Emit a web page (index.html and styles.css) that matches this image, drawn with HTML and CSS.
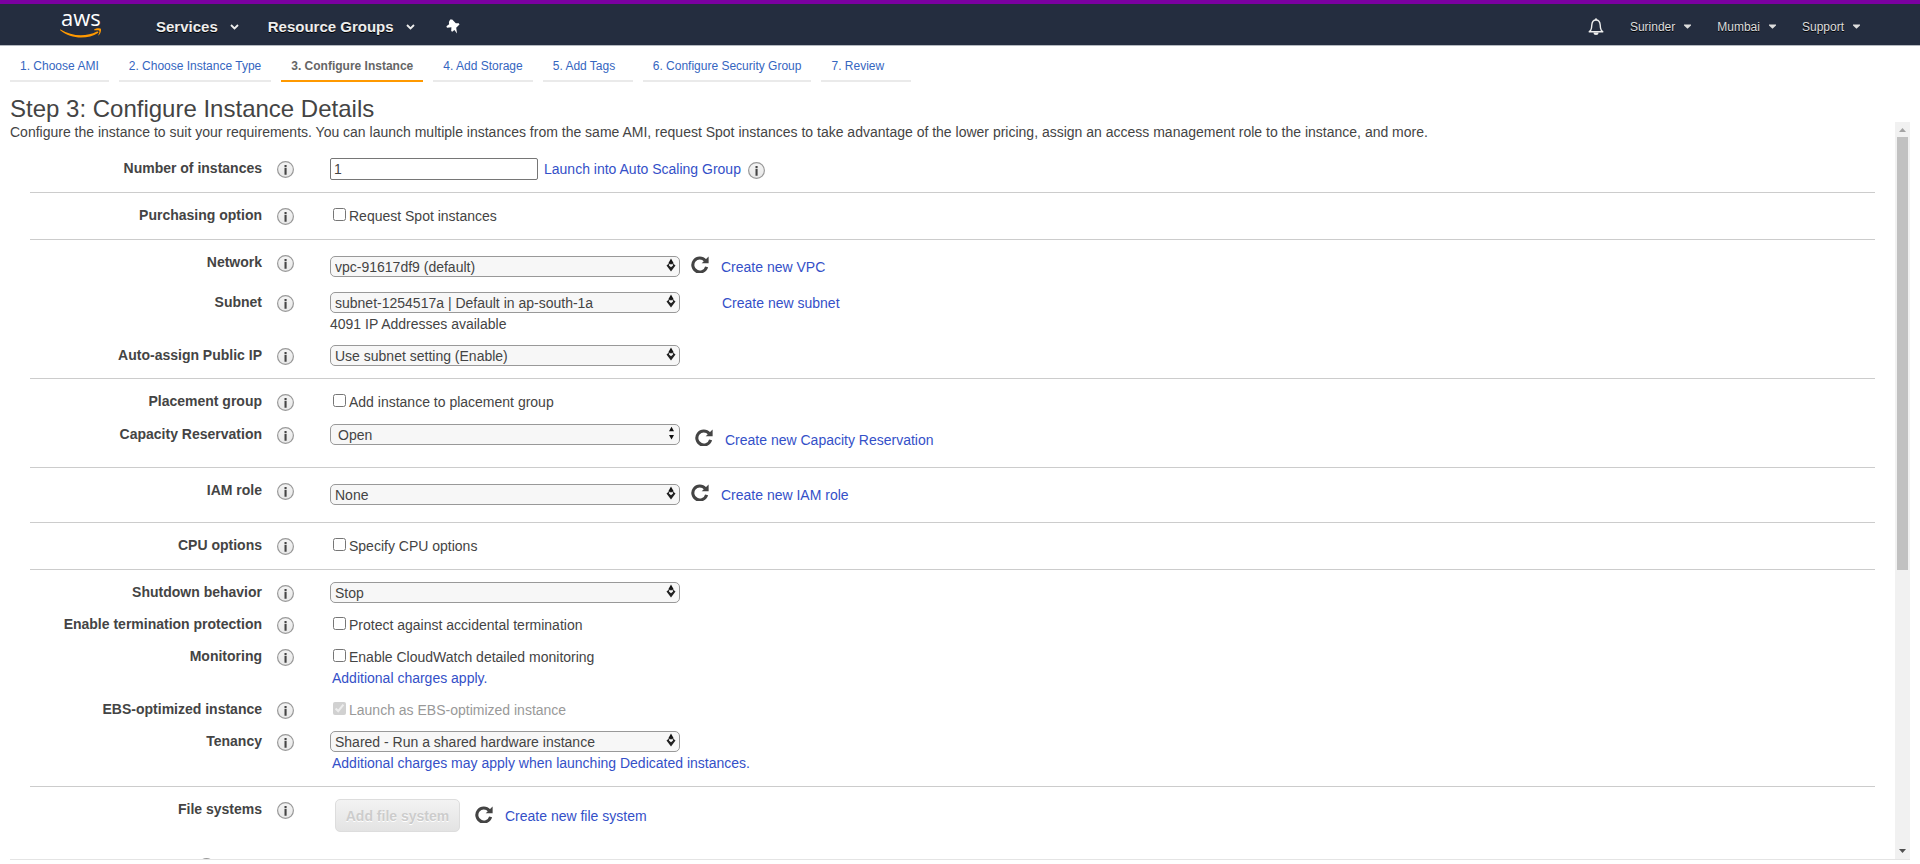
FILE: index.html
```html
<!DOCTYPE html>
<html lang="en">
<head>
<meta charset="utf-8">
<title>Launch instance wizard</title>
<link rel="stylesheet" href="styles.css">
</head>
<body>
<svg class="defs" width="0" height="0" aria-hidden="true">
  <defs>
    <linearGradient id="info-fill" x1="0" y1="0" x2="0" y2="1"><stop offset="0" stop-color="#f4f4f4"/><stop offset="1" stop-color="#e8e8e8"/></linearGradient>
    <symbol id="info" viewBox="0 0 17 17"><circle cx="8.500" cy="8.500" r="7.900" fill="url(#info-fill)" stroke="#999" stroke-width="1.200"/><path d="M7.500 4h2.100v1.900H7.500zM7.500 6.800h2.100v6.900H7.500z" fill="#444"/></symbol>
    <symbol id="refresh" viewBox="0 0 18 17"><path d="M14.200 4.500A7 7 0 1 0 15.600 10.800" fill="none" stroke="#444" stroke-width="3.100"/><path d="M17.600 .4v6.900h-6.900z" fill="#444"/></symbol>
    <symbol id="arrows" viewBox="0 0 10 14"><path d="M5 .5L7.800 5.500H2.200z" fill="#111"/><path d="M5 4L9.500 7.500 5 13.500.5 7.500z" fill="#222"/><path d="M3 6.300h4v1.200L5 9.200 3 7.500z" fill="#f7f7f7"/></symbol>
    <symbol id="arrows-plain" viewBox="0 0 10 14"><path d="M5.500 .8L8 5.300H3zM5.500 13.500L3 9h5z" fill="#111"/></symbol>
    <symbol id="chevron" viewBox="0 0 9 6"><path d="M1 1l3.500 3.500L8 1" fill="none" stroke="#eee" stroke-width="1.800"/></symbol>
    <symbol id="caret" viewBox="0 0 7 5"><path d="M0 .5h7v1L3.500 4.800 0 1.500z" fill="#ddd"/></symbol>
  </defs>
</svg>

<header class="topbar">
  <a class="logo" href="#" aria-label="AWS home">
    <svg width="42" height="54" viewBox="0 -12 42 54"><text class="logo-text" x="1" y="14">aws</text><path d="M.5 17.500C12 24.500 26 25 37 19.500c1.200-.5 2 .7.900 1.500C28 27.500 11 27.500.2 18.300c-.5-.5-.2-1.100.3-.8z" fill="#f90"/><path d="M34.200 17.400c2-1.500 6-1.400 6.600-.6.700.9-.1 4.800-2 6.500-.4.300-.7.100-.5-.3.700-1.400 1.500-3.600 1-4.300-.5-.7-3.200-.6-4.700-.5-.5 0-.7-.5-.4-.8z" fill="#f90"/></svg>
  </a>
  <nav class="menu">
    <button type="button">Services <svg width="9" height="6"><use href="#chevron"/></svg></button>
    <button type="button">Resource Groups <svg width="9" height="6"><use href="#chevron"/></svg></button>
    <button type="button" class="pin" aria-label="Pin shortcuts"><svg width="14" height="15" viewBox="0 0 14 15"><path d="M4.200 .4l2 .2 3.600 3.700 3-.1.700 1.300-3.300 3.300.8 5.800-2.600-3.700-2.200 1.800-1-.7.200-3.700L1 8.700.4 7.300l2.700-2L2.900 3z" fill="#fff"/></svg></button>
  </nav>
  <nav class="account">
    <button type="button" class="bell" aria-label="Notifications"><svg width="16" height="17" viewBox="0 0 16 17"><path d="M.8 13.800c1.700-.7 2.500-2 2.700-3.800l.3-3C4 4.200 5.600 2 8 2s4 2.200 4.200 5l.3 3c.2 1.800 1 3.100 2.700 3.800z" fill="none" stroke="#eee" stroke-width="1.400"/><circle cx="8" cy="1.300" r="1" fill="#eee"/><path d="M5.500 14.400h5a2.500 2.500 0 0 1-5 0z" fill="#eee"/></svg></button>
    <button type="button">Surinder <svg width="7" height="5"><use href="#caret"/></svg></button>
    <button type="button">Mumbai <svg width="7" height="5"><use href="#caret"/></svg></button>
    <button type="button">Support <svg width="7" height="5"><use href="#caret"/></svg></button>
  </nav>
</header>

<nav class="steps">
  <a href="#">1. Choose AMI</a>
  <a href="#">2. Choose Instance Type</a>
  <a href="#" class="current" aria-current="step">3. Configure Instance</a>
  <a href="#">4. Add Storage</a>
  <a href="#">5. Add Tags</a>
  <a href="#">6. Configure Security Group</a>
  <a href="#">7. Review</a>
</nav>

<main class="page">
  <h1>Step 3: Configure Instance Details</h1>
  <div class="panel">
    <form class="content">
      <p class="intro">Configure the instance to suit your requirements. You can launch multiple instances from the same AMI, request Spot instances to take advantage of the lower pricing, assign an access management role to the instance, and more.</p>

      <section class="group">
        <div class="row">
          <label class="name" for="count">Number of instances</label><svg class="info"><use href="#info"/></svg>
          <div class="field"><div class="line"><input class="text" id="count" type="text" value="1"><a href="#" class="near">Launch into Auto Scaling Group</a><svg class="info-inline"><use href="#info"/></svg></div></div>
        </div>
      </section>

      <section class="group">
        <div class="row">
          <span class="name">Purchasing option</span><svg class="info"><use href="#info"/></svg>
          <div class="field"><label class="check"><input type="checkbox">Request Spot instances</label></div>
        </div>
      </section>

      <section class="group">
        <div class="row linked snug">
          <label class="name" for="network">Network</label><svg class="info"><use href="#info"/></svg>
          <div class="field lowered"><div class="line"><span class="pick"><select id="network"><option>vpc-91617df9 (default)</option></select><svg><use href="#arrows"/></svg></span><span class="extra"><button type="button" class="refresh" aria-label="Refresh networks"><svg><use href="#refresh"/></svg></button><a href="#">Create new VPC</a></span></div></div>
        </div>
        <div class="row noted">
          <label class="name" for="subnet">Subnet</label><svg class="info"><use href="#info"/></svg>
          <div class="field"><div class="line"><span class="pick"><select id="subnet"><option>subnet-1254517a | Default in ap-south-1a</option></select><svg><use href="#arrows"/></svg></span><a href="#" class="apart">Create new subnet</a></div><div class="hint">4091 IP Addresses available</div></div>
        </div>
        <div class="row compact">
          <label class="name" for="publicip">Auto-assign Public IP</label><svg class="info"><use href="#info"/></svg>
          <div class="field"><span class="pick"><select id="publicip"><option>Use subnet setting (Enable)</option></select><svg><use href="#arrows"/></svg></span></div>
        </div>
      </section>

      <section class="group">
        <div class="row">
          <span class="name">Placement group</span><svg class="info"><use href="#info"/></svg>
          <div class="field"><label class="check"><input type="checkbox">Add instance to placement group</label></div>
        </div>
        <div class="row linked roomy">
          <label class="name" for="capacity">Capacity Reservation</label><svg class="info"><use href="#info"/></svg>
          <div class="field"><div class="line"><span class="pick"><select id="capacity" class="indented"><option>Open</option></select><svg><use href="#arrows-plain"/></svg></span><span class="extra dropped"><button type="button" class="refresh" aria-label="Refresh capacity reservations"><svg><use href="#refresh"/></svg></button><a href="#">Create new Capacity Reservation</a></span></div></div>
        </div>
      </section>

      <section class="group">
        <div class="row linked">
          <label class="name" for="iam">IAM role</label><svg class="info"><use href="#info"/></svg>
          <div class="field lowered"><div class="line"><span class="pick"><select id="iam"><option>None</option></select><svg><use href="#arrows"/></svg></span><span class="extra"><button type="button" class="refresh" aria-label="Refresh roles"><svg><use href="#refresh"/></svg></button><a href="#">Create new IAM role</a></span></div></div>
        </div>
      </section>

      <section class="group">
        <div class="row">
          <span class="name">CPU options</span><svg class="info"><use href="#info"/></svg>
          <div class="field"><label class="check"><input type="checkbox">Specify CPU options</label></div>
        </div>
      </section>

      <section class="group">
        <div class="row compact">
          <label class="name" for="shutdown">Shutdown behavior</label><svg class="info"><use href="#info"/></svg>
          <div class="field"><span class="pick"><select id="shutdown"><option>Stop</option></select><svg><use href="#arrows"/></svg></span></div>
        </div>
        <div class="row compact">
          <span class="name">Enable termination protection</span><svg class="info"><use href="#info"/></svg>
          <div class="field"><label class="check"><input type="checkbox">Protect against accidental termination</label></div>
        </div>
        <div class="row noted">
          <span class="name">Monitoring</span><svg class="info"><use href="#info"/></svg>
          <div class="field"><label class="check"><input type="checkbox">Enable CloudWatch detailed monitoring</label><div class="hint"><a href="#">Additional charges apply.</a></div></div>
        </div>
        <div class="row compact">
          <span class="name">EBS-optimized instance</span><svg class="info"><use href="#info"/></svg>
          <div class="field"><label class="check off"><input type="checkbox" checked disabled>Launch as EBS-optimized instance</label></div>
        </div>
        <div class="row noted roomy">
          <label class="name" for="tenancy">Tenancy</label><svg class="info"><use href="#info"/></svg>
          <div class="field"><span class="pick"><select id="tenancy"><option>Shared - Run a shared hardware instance</option></select><svg><use href="#arrows"/></svg></span><div class="hint"><a href="#">Additional charges may apply when launching Dedicated instances.</a></div></div>
        </div>
      </section>

      <section class="group last">
        <div class="row tall">
          <span class="name">File systems</span><svg class="info"><use href="#info"/></svg>
          <div class="field"><div class="line files"><button type="button" class="add" disabled>Add file system</button><button type="button" class="refresh" aria-label="Refresh file systems"><svg><use href="#refresh"/></svg></button><a href="#">Create new file system</a></div></div>
        </div>
        <div class="next"><svg><use href="#info"/></svg></div>
      </section>
    </form>
    <div class="scrollbar" aria-hidden="true">
      <svg width="15" height="15"><path d="M4 10h7L7.500 6z" fill="#a3a3a3"/></svg>
      <div class="track"><div class="thumb"></div></div>
      <svg width="15" height="15"><path d="M4 5h7L7.500 9z" fill="#505050"/></svg>
    </div>
  </div>
</main>
</body>
</html>
```
FILE: styles.css
```css
* { box-sizing: border-box; }

body {
  margin: 0;
  height: 100vh;
  display: flex;
  flex-direction: column;
  overflow: hidden;
  background: #fff;
  color: #444;
  font: 14px/18px "Liberation Sans", Arial, sans-serif;
}

a { color: #3450c8; text-decoration: none; }
svg { display: block; flex: none; }
button, input, select { font: inherit; color: inherit; margin: 0; }
button { padding: 0; border: 0; background: none; }
.defs { position: absolute; }

/* Top bar */
.topbar {
  flex: none;
  display: flex;
  align-items: center;
  height: 46px;
  padding: 4px 60px 0;
  border-top: 4px solid #7b00a0;
  border-bottom: 1px solid #b4b9c0;
  background: #242d3f;
}
.logo { margin-right: 54px; }
.logo svg { overflow: visible; }
.logo-text { font: 22px "Open Sans", sans-serif; fill: #fff; }
.menu, .account { display: flex; align-items: center; }
.menu { gap: 29px; }
.account { gap: 26px; margin-left: auto; }
.menu button {
  display: flex;
  align-items: center;
  gap: 12px;
  color: #eee;
  font-size: 15px;
  font-weight: bold;
  text-shadow: 0 1px 0 #000;
}
.menu .pin { padding-left: 2px; }
.account button {
  display: flex;
  align-items: center;
  gap: 9px;
  color: #ddd;
  font-size: 12px;
  text-shadow: 0 1px 0 #000;
}

/* Wizard steps */
.steps {
  flex: none;
  display: flex;
  gap: 10px;
  padding: 11px 10px 0;
  font-size: 12px;
}
.steps a {
  min-width: 90px;
  height: 25px;
  padding: 0 10px;
  border-bottom: 2px solid #eaeaea;
  color: #3566bf;
}
.steps .current { border-color: #f90; color: #666; font-weight: bold; }

/* Page body */
.page {
  flex: 1;
  min-height: 0;
  display: flex;
  flex-direction: column;
  padding: 14px 10px 4px;
}
h1 { margin: 0; font-size: 24px; line-height: 26px; font-weight: normal; }
.panel {
  flex: 1;
  min-height: 0;
  display: flex;
  border-bottom: 1px solid #e4e4e4;
}
.content { flex: 1; overflow: hidden; }
.intro { margin: 0 0 5px; padding-top: 1px; }

.group {
  margin: 0 20px;
  padding: 12px 0 1px;
  border-bottom: 1px solid #ccc;
}
.group.last { border-bottom: 0; }
.row {
  display: grid;
  grid-template-columns: 232px 17px 1fr;
  column-gap: 15px;
  align-items: start;
  min-height: 33px;
}
.row.compact { min-height: 32px; }
.row.linked { min-height: 41px; }
.row.linked.snug { min-height: 40px; }
.row.linked.roomy { min-height: 42px; }
.row.noted { min-height: 53px; }
.row.noted.roomy { min-height: 54px; }
.row.tall { min-height: 59px; }

.name { padding-top: 1px; text-align: right; font-weight: bold; }
.info, .info-inline, .next svg { width: 17px; height: 17px; }
.info { margin-top: 3px; }
.info-inline { margin: 4px 0 0 7px; }
.field { padding-left: 21px; }
.field.lowered { padding-top: 4px; }
.line { display: flex; align-items: flex-start; }
.line > a { padding-top: 2px; }

.text {
  width: 208px;
  height: 22px;
  padding: 1px 3px;
  border: 1px solid #767676;
  border-radius: 2px;
}
.near { margin-left: 6px; }

.pick { position: relative; display: block; width: 350px; }
.pick select {
  appearance: none;
  display: block;
  width: 100%;
  height: 21px;
  padding: 0 20px 0 4px;
  border: 1px solid #999;
  border-radius: 5px;
  background: #f7f7f7;
}
.pick select.indented { padding-left: 7px; }
.pick svg {
  position: absolute;
  top: 2px;
  right: 4px;
  width: 10px;
  height: 14px;
  pointer-events: none;
}

.extra { display: flex; align-items: flex-start; gap: 12px; margin-left: 11px; }
.extra a { padding-top: 2px; }
.extra.dropped { margin: 5px 0 0 15px; }
.refresh svg { width: 18px; height: 17px; }
.apart { margin-left: 42px; }

.check { display: flex; align-items: flex-start; gap: 3px; padding: 2px 0 0 3px; }
.check input { width: 13px; height: 13px; margin-top: 1px; }
.check.off { color: #999; }
.hint { margin-top: 2px; }
.check + .hint { margin-top: 3px; }
.hint a { margin-left: 2px; }

.files { padding-left: 5px; align-items: center; }
.files > a { padding-top: 0; }
.files .refresh { margin: 0 12px 3px 15px; }
.add {
  width: 125px;
  height: 33px;
  border: 1px solid #ddd;
  border-radius: 5px;
  background: linear-gradient(#f3f3f3, #e3e3e3);
  color: #ccc;
  font-weight: bold;
  text-shadow: 0 1px 0 #fff;
}
.next { padding-left: 168px; }

/* Scroll rail */
.scrollbar {
  flex: none;
  display: flex;
  flex-direction: column;
  width: 15px;
  background: #f1f1f1;
}
.track { flex: 1; padding: 0 2px; }
.thumb { height: 61.3%; background: #c1c1c1; }
```
